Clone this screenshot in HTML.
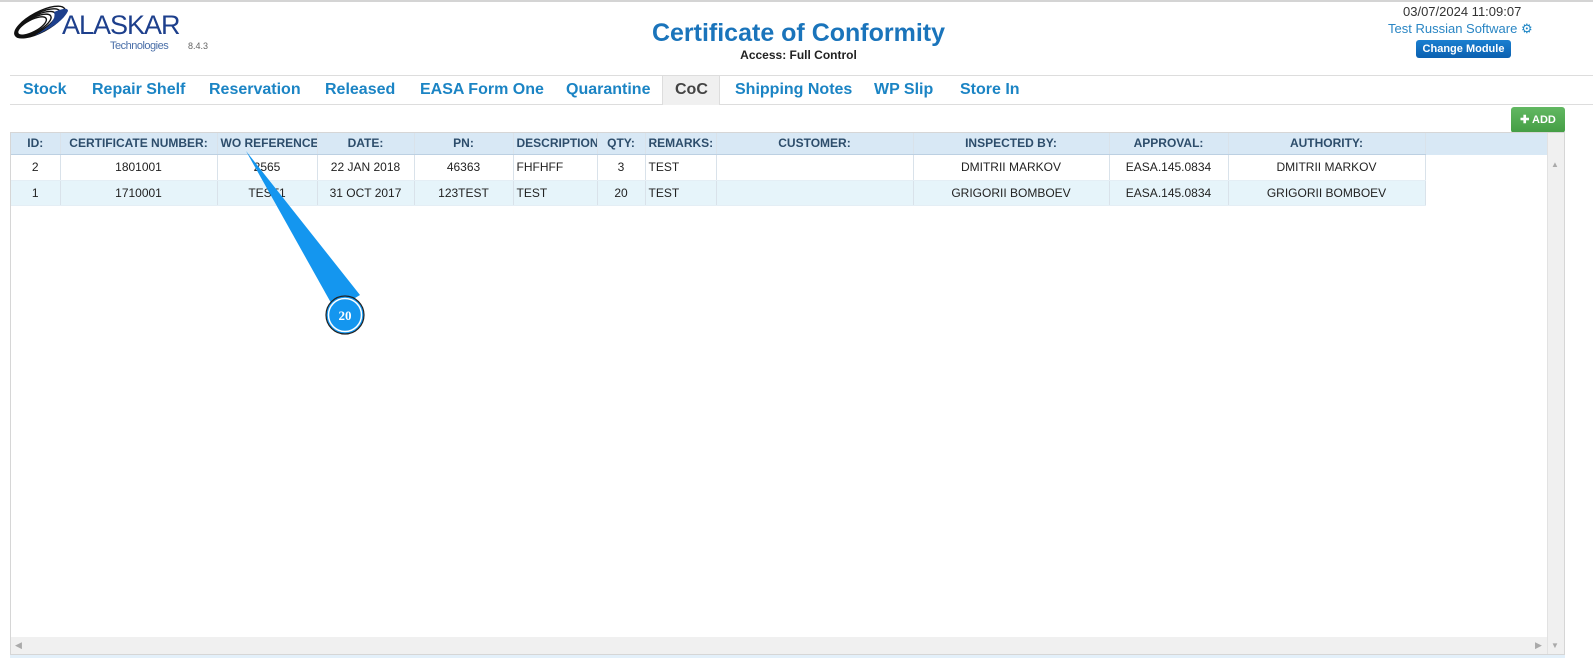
<!DOCTYPE html>
<html><head><meta charset="utf-8"><style>
*{box-sizing:border-box;margin:0;padding:0}
body{width:1593px;height:667px;overflow:hidden;background:#fff;font-family:"Liberation Sans",Arial,sans-serif;position:relative}
.a{position:absolute}
.tab{position:absolute;top:81px;font-size:16px;font-weight:bold;color:#1b84c4;white-space:nowrap}
.g{position:absolute;left:10px;top:132px;width:1555px;height:523px;border:1px solid #d6d6d6;background:#fff}
table{border-collapse:collapse;position:absolute;left:0;top:0;table-layout:fixed;width:1414px}
td,th{font-size:12px;text-align:center;white-space:nowrap;overflow:hidden;border-right:1px solid #d9e2ea;padding:0 3px}
th{height:21px;background:#d8e8f5;color:#2d4d6b;font-weight:bold;border-bottom:1px solid #bcd0e2}
td{color:#222;border-bottom:1px solid #e4eef5}
tr.r1 td{height:26px;background:#fff}
tr.r2 td{height:25px;background:#e6f4fa}
td.l{text-align:left}
</style></head><body>
<div class="a" style="left:0;top:0;width:1593px;height:2px;background:#d4d4d4"></div>
<svg class="a" style="left:10px;top:4px" width="60" height="36" viewBox="0 0 60 36">
<g fill="none" stroke="#111" stroke-width="1.4">
<ellipse cx="30" cy="18" rx="28" ry="10" transform="rotate(-28 30 18)"/>
<ellipse cx="28" cy="19" rx="25" ry="9" transform="rotate(-28 28 19)"/>
<ellipse cx="26" cy="20" rx="22" ry="8" transform="rotate(-28 26 20)"/>
<ellipse cx="24" cy="21" rx="19" ry="7" transform="rotate(-28 24 21)"/>
<ellipse cx="22" cy="22" rx="16" ry="6" transform="rotate(-28 22 22)"/>
</g><path d="M44 8 Q58 2 58 7 Q52 20 24 32 Q48 18 44 8Z" fill="#1d3f8c"/></svg>
<div class="a" style="left:62px;top:10px;font-size:27px;color:#1d3f8c;letter-spacing:-1px">ALASKAR</div>
<div class="a" style="left:110px;top:40px;font-size:11px;color:#4a6fa8;letter-spacing:-0.5px">Technologies</div>
<div class="a" style="left:188px;top:41px;font-size:9px;color:#666">8.4.3</div>
<div class="a" style="left:0;width:1597px;top:19px;text-align:center;font-size:25px;font-weight:bold;color:#1a74bb">Certificate of Conformity</div>
<div class="a" style="left:0;width:1597px;top:48px;text-align:center;font-size:12px;font-weight:bold;color:#222">Access: Full Control</div>
<div class="a" style="left:1403px;top:4px;font-size:13px;color:#333">03/07/2024 11:09:07</div>
<div class="a" style="left:1388px;top:21px;font-size:13px;color:#2a86c4">Test Russian Software <span style="color:#1b84c4">⚙</span></div>
<div class="a" style="left:1416px;top:40px;width:95px;height:18px;border-radius:3px;background:linear-gradient(#1a7fd0,#0b60b0);color:#fff;font-size:11px;font-weight:bold;text-align:center;line-height:18px">Change Module</div>
<div class="a" style="left:10px;top:75px;width:1583px;height:1px;background:#ddd"></div>
<div class="a" style="left:10px;top:104px;width:1583px;height:1px;background:#ddd"></div>
<div class="a" style="left:662px;top:75px;width:58px;height:30px;background:#f0f0f0;border:1px solid #ddd;border-bottom:none"></div>
<div class="tab" style="left:23px">Stock</div>
<div class="tab" style="left:92px">Repair Shelf</div>
<div class="tab" style="left:209px">Reservation</div>
<div class="tab" style="left:325px">Released</div>
<div class="tab" style="left:420px">EASA Form One</div>
<div class="tab" style="left:566px">Quarantine</div>
<div class="tab" style="left:675px;color:#444">CoC</div>
<div class="tab" style="left:735px">Shipping Notes</div>
<div class="tab" style="left:874px">WP Slip</div>
<div class="tab" style="left:960px">Store In</div>
<div class="a" style="left:1511px;top:107px;width:54px;height:26px;border-radius:3px;background:linear-gradient(#62b862,#449d44);color:#fff;font-size:11px;font-weight:bold;text-align:center;line-height:26px">✚ ADD</div>
<div class="g">
<div class="a" style="left:0;top:0;width:1553px;height:22px;background:#d8e8f5"></div>
<table>
<colgroup><col style="width:49px"><col style="width:157px"><col style="width:100px"><col style="width:97px"><col style="width:99px"><col style="width:84px"><col style="width:48px"><col style="width:71px"><col style="width:197px"><col style="width:196px"><col style="width:119px"><col style="width:197px"></colgroup>
<tr><th>ID:</th><th>CERTIFICATE NUMBER:</th><th style="text-align:left">WO REFERENCE:</th><th>DATE:</th><th>PN:</th><th style="text-align:left">DESCRIPTION:</th><th>QTY:</th><th style="text-align:left">REMARKS:</th><th>CUSTOMER:</th><th>INSPECTED BY:</th><th>APPROVAL:</th><th>AUTHORITY:</th></tr>
<tr class="r1"><td>2</td><td>1801001</td><td>2565</td><td>22 JAN 2018</td><td>46363</td><td class="l">FHFHFF</td><td>3</td><td class="l">TEST</td><td></td><td>DMITRII MARKOV</td><td>EASA.145.0834</td><td>DMITRII MARKOV</td></tr>
<tr class="r2"><td>1</td><td>1710001</td><td>TEST1</td><td>31 OCT 2017</td><td>123TEST</td><td class="l">TEST</td><td>20</td><td class="l">TEST</td><td></td><td>GRIGORII BOMBOEV</td><td>EASA.145.0834</td><td>GRIGORII BOMBOEV</td></tr>
</table>
<div class="a" style="left:1536px;top:0;width:17px;height:521px;background:#f0f0f0;border-left:1px solid #e2e2e2"></div>
<div class="a" style="left:1540px;top:27px;font-size:8px;color:#aaa">▲</div>
<div class="a" style="left:1540px;top:508px;font-size:8px;color:#aaa">▼</div>
<div class="a" style="left:0;top:504px;width:1536px;height:17px;background:#f0f0f0"></div>
<div class="a" style="left:4px;top:507px;font-size:9px;color:#aaa">◀</div>
<div class="a" style="left:1524px;top:507px;font-size:9px;color:#aaa">▶</div>
</div>
<div class="a" style="left:10px;top:655px;width:1555px;height:3px;background:#e3f0fa"></div>
<svg class="a" style="left:240px;top:145px" width="140" height="200"><path d="M6 6 L120 150 L95 165 Z" fill="#1496ef"/><circle cx="105" cy="170" r="19" fill="#1496ef" stroke="#222" stroke-width="1.2"/><circle cx="105" cy="170" r="16.5" fill="none" stroke="#fff" stroke-width="1.5"/><text x="105" y="175" text-anchor="middle" font-family="Liberation Serif" font-weight="bold" font-size="13" fill="#fff">20</text></svg>
</body></html>
